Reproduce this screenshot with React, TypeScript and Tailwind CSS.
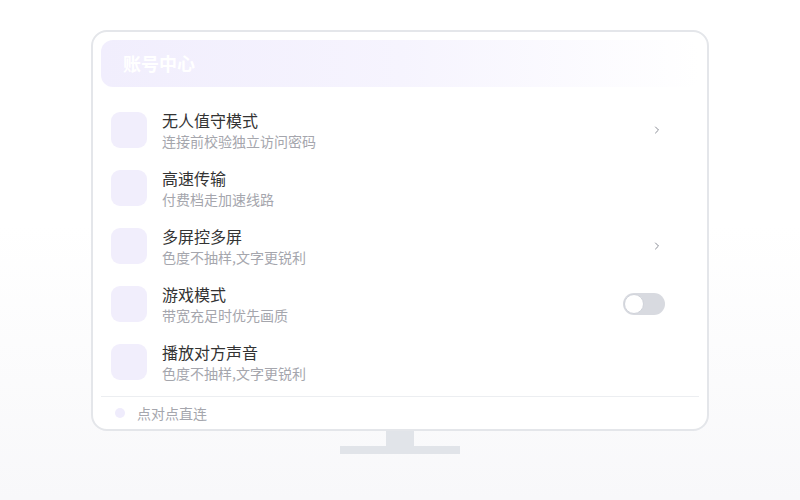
import { ChevronRight } from "lucide-react";

type Row = { title: string; sub: string; right?: "chevron" | "toggle" };

const rows: Row[] = [
  { title: "无人值守模式", sub: "连接前校验独立访问密码", right: "chevron" },
  { title: "高速传输", sub: "付费档走加速线路" },
  { title: "多屏控多屏", sub: "色度不抽样,文字更锐利", right: "chevron" },
  { title: "游戏模式", sub: "带宽充足时优先画质", right: "toggle" },
  { title: "播放对方声音", sub: "色度不抽样,文字更锐利" },
];

function Toggle() {
  return (
    <div className="w-[42px] h-[22px] rounded-full bg-[#d8dae0] flex items-center px-px">
      <div className="w-[20px] h-[20px] rounded-full bg-white border border-[#d0d3da]" />
    </div>
  );
}

export default function App() {
  return (
    <div
      className="w-full h-[500px] bg-gradient-to-b from-white from-45% to-[#f8f8fa] pt-[30px] flex flex-col items-center"
      style={{ fontFamily: '"Noto Sans CJK SC", "Noto Sans", sans-serif' }}
    >
      <div className="w-[618px] h-[401px] border-2 border-[#e4e6ea] rounded-[16px] bg-white px-2 pt-2 flex flex-col">
        <div className="h-[47px] shrink-0 rounded-[12px] bg-gradient-to-r from-[#f1eefd] via-[#f6f4fe] to-white flex items-center pl-[22px]">
          <span className="text-white font-bold text-[18px]">账号中心</span>
        </div>

        <div className="mt-[14px] pl-[10px] flex flex-col shrink-0">
          {rows.map((r) => (
            <div key={r.title} className="h-[58px] flex items-center">
              <div className="w-[36px] h-[36px] rounded-[9px] bg-[#f1eefc] shrink-0" />
              <div className="ml-[15px] flex flex-col flex-1">
                <span className="text-[16px] leading-[22px] text-[#333333]">{r.title}</span>
                <span className="text-[14px] leading-[20px] text-[#a5a6ad]">{r.sub}</span>
              </div>
              <div className="w-[42px] mr-[34px] flex justify-end">
                {r.right === "chevron" && (
                  <ChevronRight className="w-[12px] h-[12px] text-[#8a8d96] mr-[2px]" strokeWidth={2} />
                )}
                {r.right === "toggle" && <Toggle />}
              </div>
            </div>
          ))}
        </div>

        <div className="mt-[5px] shrink-0 border-t border-[#eceef1] flex items-center h-[33px] pl-[14px]">
          <div className="w-[10px] h-[10px] rounded-full bg-[#efecfc]" />
          <span className="ml-[12px] text-[14px] text-[#a5a6ad]">点对点直连</span>
        </div>
      </div>
      <div className="w-[28px] h-[15px] bg-[#e1e4e9]" />
      <div className="w-[120px] h-[8px] bg-[#e1e4e9]" />
    </div>
  );
}
